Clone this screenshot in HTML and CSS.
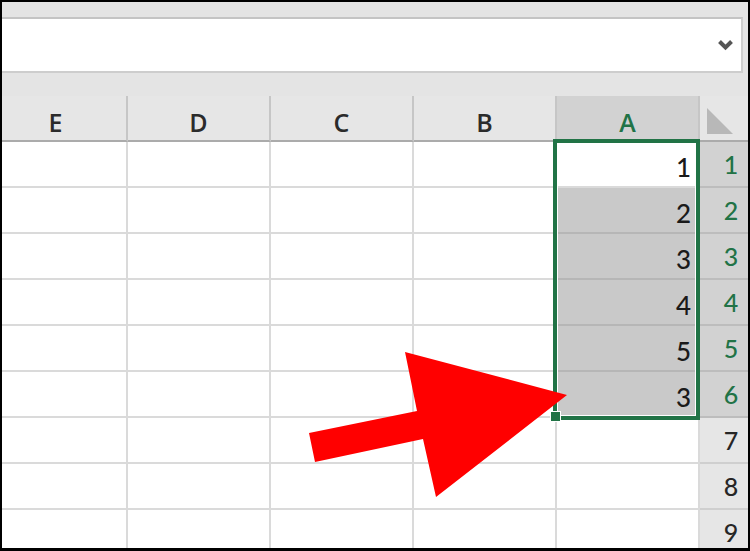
FILE: index.html
```html
<!DOCTYPE html>
<html lang="en">
<head>
  <meta charset="UTF-8">
  <title>Sheet - fill down</title>
  <link rel="stylesheet" href="styles.css">
</head>
<body>

  <div class="frame">
    <div class="toolbar">
      <div class="formula">
        <svg class="chevron" width="17" height="12" viewBox="0 0 17 12">
          <polyline points="2.5,2.5 8.5,8.5 14.5,2.5" fill="none" stroke="#555" stroke-width="4"/>
        </svg>
      </div>
    </div>

    <div class="sheet">
      <!-- column headers (right-to-left sheet) -->
      <div class="hdr">E</div>
      <div class="hdr">D</div>
      <div class="hdr">C</div>
      <div class="hdr">B</div>
      <div class="hdr sel">A</div>
      <div class="corner">
        <svg width="26" height="26" viewBox="0 0 26 26"><polygon points="0,0 0,26 26,26" fill="#b8b8b8"/></svg>
      </div>

      <div class="cell"></div><div class="cell"></div><div class="cell"></div><div class="cell"></div>
      <div class="cell num">1</div><div class="rowhdr sel">1</div>

      <div class="cell"></div><div class="cell"></div><div class="cell"></div><div class="cell"></div>
      <div class="cell num filled">2</div><div class="rowhdr sel">2</div>

      <div class="cell"></div><div class="cell"></div><div class="cell"></div><div class="cell"></div>
      <div class="cell num filled">3</div><div class="rowhdr sel">3</div>

      <div class="cell"></div><div class="cell"></div><div class="cell"></div><div class="cell"></div>
      <div class="cell num filled">4</div><div class="rowhdr sel">4</div>

      <div class="cell"></div><div class="cell"></div><div class="cell"></div><div class="cell"></div>
      <div class="cell num filled">5</div><div class="rowhdr sel">5</div>

      <div class="cell"></div><div class="cell"></div><div class="cell"></div><div class="cell"></div>
      <div class="cell num filled">3</div><div class="rowhdr sel">6</div>

      <div class="cell"></div><div class="cell"></div><div class="cell"></div><div class="cell"></div>
      <div class="cell"></div><div class="rowhdr">7</div>

      <div class="cell"></div><div class="cell"></div><div class="cell"></div><div class="cell"></div>
      <div class="cell"></div><div class="rowhdr">8</div>

      <div class="cell"></div><div class="cell"></div><div class="cell"></div><div class="cell"></div>
      <div class="cell"></div><div class="rowhdr">9</div>
    </div>

    <div class="selection"></div>
    <div class="handle"></div>

    <svg class="arrow" width="750" height="551" viewBox="0 0 750 551">
      <polygon points="309,433 417,411 405,352 567,395 436,497 423,439 315,462" fill="#ff0000"/>
    </svg>
  </div>

</body>
</html>
```

FILE: styles.css
```css
body {
  margin: 0;
  background: #000;
}

.frame {
  position: relative;
  width: 750px;
  height: 551px;
  box-sizing: border-box;
  border: 2px solid #000;
  border-bottom-width: 3px;
  background: #e4e4e4;
  overflow: hidden;
}

.toolbar {
  height: 94px;
  padding-top: 13px;
  box-sizing: border-box;
  border-top: 2px solid #e4e4e4;
}

.formula {
  height: 56px;
  margin: 0 5px 0 -4px;
  box-sizing: border-box;
  background: #fff;
  border: 2px solid #cdcdcd;
  border-top-color: #c4c4c4;
  display: flex;
  justify-content: flex-end;
  align-items: center;
  padding-right: 7px;
}

.sheet {
  display: grid;
  grid-template-columns: repeat(5, 143px) 62px;
  grid-auto-rows: 46px;
  margin-left: -17px;
  background: #fff;
}

.hdr,
.corner {
  box-sizing: border-box;
  background: #e6e6e6;
  border-right: 2px solid #c6c6c6;
  border-bottom: 2px solid #ababab;
  display: flex;
  justify-content: center;
  align-items: flex-end;
  padding-bottom: 5px;
  font-family: "Open Sans", sans-serif;
  font-size: 25px;
  font-weight: 600;
  line-height: 1;
  color: #2b2b2b;
}

.hdr.sel {
  background: #d2d2d2;
  color: #217346;
}

.corner {
  justify-content: flex-start;
  align-items: flex-start;
  padding: 12px 0 0 7px;
  border-right: none;
}

.cell {
  box-sizing: border-box;
  border-right: 2px solid #dadada;
  border-bottom: 2px solid #dadada;
  background: #fff;
}

.num {
  display: flex;
  justify-content: flex-end;
  align-items: flex-end;
  padding: 0 7px 6px 0;
  font-family: Lato, sans-serif;
  font-size: 26px;
  font-weight: 500;
  line-height: 1;
  color: #1a1a1a;
}

.num.filled {
  background: #c9c9c9;
  border-bottom-color: #b6b6b6;
}

.rowhdr {
  box-sizing: border-box;
  background: #e6e6e6;
  border-bottom: 2px solid #cfcfcf;
  display: flex;
  justify-content: center;
  align-items: center;
  font-family: Lato, sans-serif;
  font-size: 25px;
  font-weight: 500;
  line-height: 1;
  color: #262626;
}

.rowhdr.sel {
  background: #d2d2d2;
  border-bottom-color: #bdbdbd;
  color: #217346;
}

.selection {
  position: absolute;
  left: 551px;
  top: 137px;
  width: 147px;
  height: 281px;
  box-sizing: border-box;
  border: 4px solid #217346;
  box-shadow: inset 0 0 0 1px #fff;
}

.handle {
  position: absolute;
  left: 548px;
  top: 409px;
  width: 11px;
  height: 11px;
  box-sizing: border-box;
  background: #217346;
  border: 1px solid #fff;
}

.arrow {
  position: absolute;
  left: -2px;
  top: -2px;
  pointer-events: none;
}
```
